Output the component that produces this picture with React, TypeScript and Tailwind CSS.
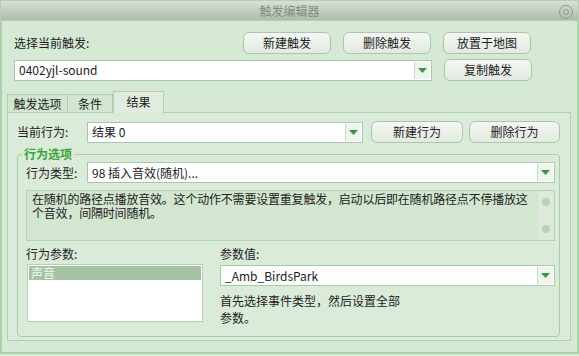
const FONT = "font-['Noto_Sans_CJK_SC','Noto_Sans',sans-serif]"

function Arrow() {
  return (
    <div className="flex w-[16px] self-stretch items-center justify-center border-l border-[#c9dcc8] bg-[#eef4ee]">
      <svg width="9" height="5" viewBox="0 0 9 5">
        <path d="M0 0 H9 L4.5 5 Z" fill="#3f9443" />
      </svg>
    </div>
  )
}

function Select({ value, className }: { value: string; className: string }) {
  return (
    <div className={`flex h-[21px] items-stretch border border-[#a8c9a6] bg-white ${className}`}>
      <div className="flex flex-1 items-center pl-[4px] text-[12px] text-[#222]">{value}</div>
      <div className="flex py-[1px] pr-[1px]">
        <Arrow />
      </div>
    </div>
  )
}

function Btn({ label, className }: { label: string; className: string }) {
  return (
    <button
      className={`flex h-[22px] items-center justify-center rounded-[6px] border border-[#a9c8a7] bg-gradient-to-b from-[#f4f7f3] to-[#e2eae1] text-[12px] text-[#222] ${className}`}
    >
      {label}
    </button>
  )
}

export default function App() {
  return (
    <div className={`${FONT} flex h-[356px] w-[579px] flex-col overflow-hidden bg-[#d6e9d4] text-[12px] text-[#222]`}>
      {/* title bar */}
      <div className="relative flex h-[21px] shrink-0 items-center justify-center border border-[#b9cdb8] bg-gradient-to-b from-[#d9e0d8] to-[#aebcad]">
        <span className="text-[12px] text-[#7f8f7e]">触发编辑器</span>
        <div className="absolute right-[5px] top-[4px] flex h-[14px] w-[14px] items-center justify-center rounded-full border border-[#8d9a8c]">
          <div className="h-[6px] w-[6px] rounded-full border border-[#8d9a8c]" />
        </div>
      </div>

      <div className="mb-[2px] flex flex-1 flex-col border-x-[2px] border-b-[2px] border-[#a9d3a6] px-[3px] pb-[11px]">
        {/* trigger selector */}
        <div className="mt-[11px] flex items-center pl-[9px]">
          <span className="w-[229px]">选择当前触发:</span>
          <Btn label="新建触发" className="w-[88px]" />
          <Btn label="删除触发" className="ml-[12px] w-[88px]" />
          <Btn label="放置于地图" className="ml-[12px] w-[88px]" />
        </div>
        <div className="mt-[5px] flex items-center pl-[9px]">
          <Select value="0402yjl-sound" className="w-[418px]" />
          <Btn label="复制触发" className="ml-[12px] w-[88px]" />
        </div>

        {/* tabs */}
        <div className="mt-[10px] flex items-end pl-[2px]">
          <div className="flex h-[18px] w-[61px] items-center justify-center border border-b-0 border-[#b2cfb0] bg-[#d3e6d1]">触发选项</div>
          <div className="flex h-[18px] w-[45px] items-center justify-center border border-b-0 border-l-0 border-[#b2cfb0] bg-[#d3e6d1]">条件</div>
          <div className="relative z-10 -mb-px flex h-[22px] w-[51px] items-start justify-center border border-b-0 border-[#b2cfb0] bg-[#e1ece0] pt-[1px]">结果</div>
        </div>

        <div className="ml-[2px] mr-[3px] flex flex-1 flex-col border border-[#b2cfb0] bg-[#dbebd9] pl-[9px] pr-[10px]">
          <div className="mt-[8px] flex items-center">
            <span className="w-[70px]">当前行为:</span>
            <Select value="结果 0" className="w-[276px]" />
            <Btn label="新建行为" className="ml-[8px] w-[92px]" />
            <Btn label="删除行为" className="ml-[6px] w-[91px]" />
          </div>

          {/* group box */}
          <div className="relative mt-[11px] flex flex-col rounded-[4px] border border-[#a9cea7] pb-[10px] pl-[8px] pr-[4px]">
            <span className="absolute -top-[9px] left-[4px] bg-[#dbebd9] px-[2px] text-[12px] font-bold leading-[16px] text-[#3aa53a]">行为选项</span>
            <div className="mt-[7px] flex items-center">
              <span className="w-[61px]">行为类型:</span>
              <Select value="98 插入音效(随机)..." className="flex-1" />
            </div>
            <div className="mt-[7px] flex h-[51px] border border-[#b5d2b3] bg-[#d2e6d0]">
              <p className="flex-1 pl-[5px] pt-[1px] text-[12px] leading-[14px] tracking-[-0.2px]">
                在随机的路径点播放音效。这个动作不需要设置重复触发，启动以后即在随机路径点不停播放这个音效，间隔时间随机。
              </p>
              <div className="flex w-[16px] flex-col items-center justify-between bg-[#dce9db] py-[7px]">
                <div className="h-[8px] w-[8px] rounded-full bg-[#bcd2bb]" />
                <div className="h-[8px] w-[8px] rounded-full bg-[#bcd2bb]" />
              </div>
            </div>
            <div className="mt-[5px] flex">
              <div className="flex w-[194px] flex-col">
                <span className="leading-[16px]">行为参数:</span>
                <div className="ml-[1px] mt-[2px] h-[58px] w-[176px] border border-[#b5d2b3] bg-white p-[1px]">
                  <div className="flex h-[14px] items-center bg-[#a6c4a4] pl-[2px] text-[12px] text-[#f2f7f2]">声音</div>
                </div>
              </div>
              <div className="flex flex-1 flex-col">
                <span className="leading-[16px]">参数值:</span>
                <Select value="_Amb_BirdsPark" className="mt-[3px]" />
                <p className="mt-[6px] text-[12px] leading-[17px]">首先选择事件类型，然后设置全部<br />参数。</p>
              </div>
            </div>
          </div>
        </div>
      </div>
    </div>
  )
}
